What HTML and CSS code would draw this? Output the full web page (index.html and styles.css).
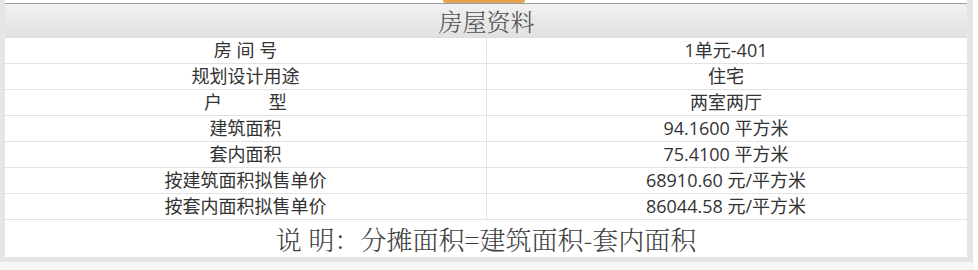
FILE: index.html
```html
<!DOCTYPE html>
<html lang="zh-CN">
<head>
<meta charset="utf-8">
<title>房屋资料</title>
<link rel="stylesheet" href="styles.css">
</head>
<body>
<div class="frame">
  <div class="tabbar"><span class="tab"></span></div>
  <div class="panel">
    <div class="head">房屋资料</div>
    <div class="grid">
      <div class="cell">房 间 号</div><div class="cell val">1单元-401</div>
      <div class="cell">规划设计用途</div><div class="cell val">住宅</div>
      <div class="cell">户&nbsp;&nbsp;&nbsp;&nbsp;&nbsp;&nbsp;&nbsp;&nbsp;&nbsp;&nbsp;型</div><div class="cell val">两室两厅</div>
      <div class="cell">建筑面积</div><div class="cell val">94.1600 平方米</div>
      <div class="cell">套内面积</div><div class="cell val">75.4100 平方米</div>
      <div class="cell">按建筑面积拟售单价</div><div class="cell val">68910.60 元/平方米</div>
      <div class="cell">按套内面积拟售单价</div><div class="cell val">86044.58 元/平方米</div>
    </div>
    <div class="note">说 明：分摊面积=建筑面积-套内面积</div>
  </div>
</div>
<div class="footer"></div>
</body>
</html>
```

FILE: styles.css
```css
html, body {
  margin: 0;
  padding: 0;
  background: #ffffff;
}
body {
  font-family: "Open Sans", "Noto Sans CJK SC", sans-serif;
  color: #333333;
}
.frame {
  width: 962px;
  border-left: 5px solid #e5e5e5;
  border-right: 6px solid #e5e5e5;
  border-bottom: 5px solid #e5e5e5;
  background: #ffffff;
}
.tabbar {
  height: 3px;
  display: flex;
  justify-content: center;
  padding-right: 5px;
}
.tab {
  width: 82px;
  height: 3px;
  background: #e3a24e;
  border-radius: 0 0 4px 4px;
}
.panel {
  border-top: 1px solid #9a9a9a;
}
.head {
  height: 33px;
  border-bottom: 1px solid #dedede;
  background: linear-gradient(#f1f1f1, #e1e1e1);
  text-align: center;
  font-family: "Noto Serif CJK SC", "Noto Sans CJK SC", serif;
  font-size: 24px;
  font-weight: 300;
  line-height: 33px;
  color: #505050;
  padding-left: 1px;
}
.grid {
  display: grid;
  grid-template-columns: 482px 1fr;
}
.cell {
  height: 25px;
  border-bottom: 1px solid #e2e2e2;
  text-align: center;
  font-size: 18px;
  line-height: 25px;
  white-space: pre;
}
.cell:not(.val) {
  border-right: 1px solid #e2e2e2;
}
.val {
  padding-right: 2px;
}
.note {
  height: 37px;
  text-align: center;
  font-family: "Noto Serif CJK SC", "Noto Sans CJK SC", serif;
  font-size: 26px;
  font-weight: 300;
  line-height: 37px;
  color: #404040;
}
.footer {
  width: 975px;
  height: 8px;
  background: #f7f7f7;
}
```
